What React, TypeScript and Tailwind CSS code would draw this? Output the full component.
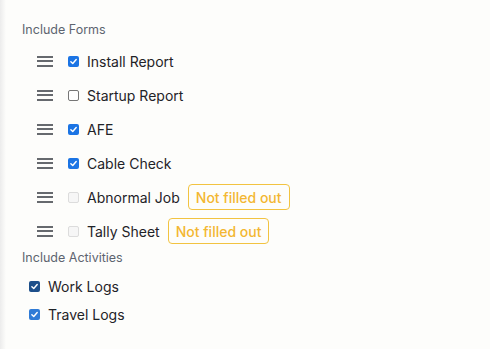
import React from 'react';

type Form = { name: string; checked: boolean; missing?: boolean };

const forms: Form[] = [
  { name: 'Install Report', checked: true },
  { name: 'Startup Report', checked: false },
  { name: 'AFE', checked: true },
  { name: 'Cable Check', checked: true },
  { name: 'Abnormal Job', checked: false, missing: true },
  { name: 'Tally Sheet', checked: false, missing: true },
];

function Check({ checked, disabled, tone = 'bg-[#1b74e4]' }: { checked: boolean; disabled?: boolean; tone?: string }) {
  if (checked) {
    return (
      <span className={`w-[11px] h-[11px] rounded-[2px] ${tone} flex items-center justify-center flex-shrink-0`}>
        <svg viewBox="0 0 12 12" className="w-[9px] h-[9px]">
          <path d="M2.5 6.2 L5 8.6 L9.6 3.4" fill="none" stroke="white" strokeWidth="1.9" strokeLinecap="round" strokeLinejoin="round" />
        </svg>
      </span>
    );
  }
  return (
    <span
      className={`block w-[11px] h-[11px] rounded-[2px] border flex-shrink-0 ${
        disabled ? 'border-[#dcdcdc] bg-[#f6f6f6]' : 'border-[#767676] bg-white'
      }`}
    />
  );
}

function Grip() {
  return (
    <div className="w-[16px] flex flex-col gap-[2.5px]">
      <span className="h-[2px] bg-[#66696e]" />
      <span className="h-[2px] bg-[#66696e]" />
      <span className="h-[2px] bg-[#66696e]" />
    </div>
  );
}

export default function App() {
  return (
    <div
      className="w-[490px] h-[349px] bg-[#fdfdfb] relative overflow-hidden"
      style={{ fontFamily: 'Inter, "Noto Sans", sans-serif' }}
    >
      <div className="absolute left-0 top-0 bottom-0 w-[6px] bg-gradient-to-r from-[#ececec] to-transparent" />
      <div className="pl-[22px] pt-[22px]">
        <div className="text-[12.5px] text-[#5d6470] leading-[16px]">Include Forms</div>
        <div className="mt-[6px] flex flex-col">
          {forms.map((f) => (
            <div key={f.name} className="h-[34px] flex items-center pl-[15px]">
              <Grip />
              <div className="ml-[15px]">
                <Check checked={f.checked} disabled={f.missing} />
              </div>
              <span className="ml-[8px] text-[14px] text-[#1f2328]">{f.name}</span>
              {f.missing && (
                <span className="ml-[8px] h-[26px] px-[7px] flex items-center border border-[#f2c341] rounded-[4px] text-[14px] text-[#f3b731] font-medium">
                  Not filled out
                </span>
              )}
            </div>
          ))}
        </div>
        <div className="mt-[2px] text-[12.5px] text-[#5d6470] leading-[16px]">Include Activities</div>
        <div className="mt-[6px] flex flex-col pl-[7px]">
          <div className="h-[28px] flex items-center">
            <Check checked tone="bg-[#1d4f8a]" />
            <span className="ml-[8px] text-[14px] text-[#1f2328]">Work Logs</span>
          </div>
          <div className="h-[28px] flex items-center">
            <Check checked tone="bg-[#2f7bd6]" />
            <span className="ml-[8px] text-[14px] text-[#1f2328]">Travel Logs</span>
          </div>
        </div>
      </div>
    </div>
  );
}
